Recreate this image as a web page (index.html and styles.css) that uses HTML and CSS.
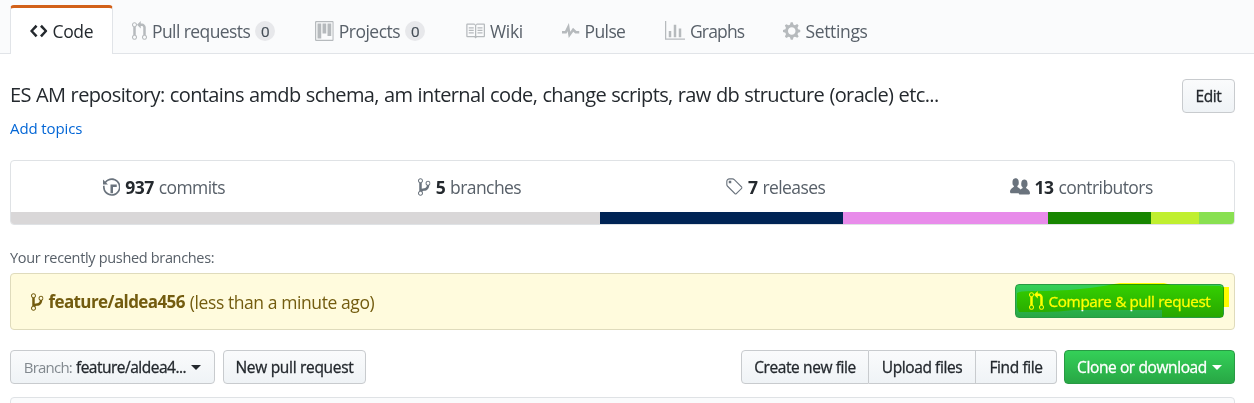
FILE: index.html
```html
<!DOCTYPE html>
<html lang="en">
<head>
<meta charset="utf-8">
<title>Repository</title>
<link rel="stylesheet" href="styles.css">
</head>
<body>
<svg class="defs" aria-hidden="true">
  <symbol id="code" viewBox="0 0 14 16"><path d="M9.5 3L8 4.5 11.5 8 8 11.5 9.5 13 14 8 9.5 3zm-5 0L0 8l4.5 5L6 11.5 2.5 8 6 4.5 4.5 3z"/></symbol>
  <symbol id="pr" viewBox="0 0 12 16"><path d="M11 11.28V5c-.03-.78-.34-1.47-.94-2.06C9.46 2.35 8.78 2.03 8 2H7V0L4 3l3 3V4h1c.27.02.48.11.69.31.21.2.3.42.31.69v6.28A1.993 1.993 0 0 0 10 15a1.993 1.993 0 0 0 1-3.72zm-1 2.92c-.66 0-1.2-.55-1.2-1.2 0-.65.55-1.2 1.2-1.2.65 0 1.2.55 1.2 1.2 0 .65-.55 1.2-1.2 1.2zM4 3c0-1.11-.89-2-2-2a1.993 1.993 0 0 0-1 3.72v6.56A1.993 1.993 0 0 0 2 15a1.993 1.993 0 0 0 1-3.72V4.72c.59-.34 1-.98 1-1.72zm-.8 10c0 .66-.55 1.2-1.2 1.2-.65 0-1.2-.55-1.2-1.2 0-.65.55-1.2 1.2-1.2.65 0 1.2.55 1.2 1.2zM2 4.2C1.34 4.2.8 3.65.8 3c0-.65.55-1.2 1.2-1.2.65 0 1.2.55 1.2 1.2 0 .65-.55 1.2-1.2 1.2z"/></symbol>
  <symbol id="project" viewBox="0 0 15 16"><path fill-rule="evenodd" d="M10 12h3V2h-3v10zm-4-2h3V2H6v8zm-4 4h3V2H2v12zm-1 1h13V1H1v14zM14 0H1a1 1 0 0 0-1 1v14a1 1 0 0 0 1 1h13a1 1 0 0 0 1-1V1a1 1 0 0 0-1-1z"/></symbol>
  <symbol id="book" viewBox="0 0 16 16"><path d="M3 5h4v1H3V5zm0 3h4V7H3v1zm0 2h4V9H3v1zm11-5h-4v1h4V5zm0 2h-4v1h4V7zm0 2h-4v1h4V9zm2-6v9c0 .55-.45 1-1 1H9.5l-1 1-1-1H2c-.55 0-1-.45-1-1V3c0-.55.45-1 1-1h5.5l1 1 1-1H15c.55 0 1 .45 1 1zm-8 .5L7.5 3H2v9h6V3.5zm7-.5H9.5l-.5.5V12h6V3z"/></symbol>
  <symbol id="pulse" viewBox="0 0 14 16"><path d="M11.5 8L8.8 5.4 6.6 8.5 5.5 1.6 2.38 8H0v2h3.6l.9-1.8.9 5.4L9 8.5l1.6 1.5H14V8h-2.5z"/></symbol>
  <symbol id="graph" viewBox="0 0 16 16"><path d="M16 14v1H0V0h1v14h15zM5 13H3V8h2v5zm4 0H7V3h2v10zm4 0h-2V6h2v7z"/></symbol>
  <symbol id="gear" viewBox="0 0 14 16"><path d="M14 8.77v-1.6l-1.94-.64-.45-1.09.88-1.84-1.13-1.13-1.81.91-1.09-.45-.69-1.92h-1.6l-.63 1.94-1.11.45-1.84-.88-1.13 1.13.91 1.81-.45 1.09L0 7.23v1.59l1.94.64.45 1.09-.88 1.84 1.13 1.13 1.81-.91 1.09.45.69 1.92h1.59l.63-1.94 1.11-.45 1.84.88 1.13-1.13-.92-1.81.47-1.09L14 8.75v.02zM7 11c-1.66 0-3-1.34-3-3s1.34-3 3-3 3 1.34 3 3-1.34 3-3 3z"/></symbol>
  <symbol id="history" viewBox="0 0 14 16"><path d="M8 13H6V6h5v2H8v5zM7 1C4.81 1 2.87 2.02 1.59 3.59L0 2v4h4L2.5 4.5C3.55 3.17 5.17 2.3 7 2.3c3.14 0 5.7 2.56 5.7 5.7s-2.56 5.7-5.7 5.7A5.71 5.71 0 0 1 1.3 8c0-.34.03-.67.09-1H.08C.03 7.33 0 7.66 0 8c0 3.86 3.14 7 7 7s7-3.14 7-7-3.14-7-7-7z"/></symbol>
  <symbol id="branch" viewBox="0 0 10 16"><path d="M10 5c0-1.11-.89-2-2-2a1.993 1.993 0 0 0-1 3.72v.3c-.02.52-.23.98-.63 1.38-.4.4-.86.61-1.38.63-.83.02-1.48.16-2 .45V4.72a1.993 1.993 0 0 0-1-3.72C.88 1 0 1.89 0 3a2 2 0 0 0 1 1.72v6.56c-.59.35-1 .99-1 1.72 0 1.11.89 2 2 2 1.11 0 2-.89 2-2 0-.53-.2-1-.53-1.36.09-.06.48-.41.59-.47.25-.11.56-.17.94-.17 1.05-.05 1.95-.45 2.75-1.25S8.95 7.77 9 6.73h-.02C9.59 6.37 10 5.73 10 5zM2 1.8c.66 0 1.2.55 1.2 1.2 0 .65-.55 1.2-1.2 1.2C1.35 4.2.8 3.65.8 3c0-.65.55-1.2 1.2-1.2zm0 12.41c-.66 0-1.2-.55-1.2-1.2 0-.65.55-1.2 1.2-1.2.65 0 1.2.55 1.2 1.2 0 .65-.55 1.2-1.2 1.2zm6-8c-.66 0-1.2-.55-1.2-1.2 0-.65.55-1.2 1.2-1.2.65 0 1.2.55 1.2 1.2 0 .65-.55 1.2-1.2 1.2z"/></symbol>
  <symbol id="tag" viewBox="0 0 14 16"><path d="M7.73 1.73C7.26 1.26 6.62 1 5.96 1H3.5C2.13 1 1 2.13 1 3.5v2.47c0 .66.27 1.3.73 1.77l6.06 6.06c.39.39 1.02.39 1.41 0l4.59-4.59a.996.996 0 0 0 0-1.41L7.73 1.73zM2.38 7.09c-.31-.3-.47-.7-.47-1.13V3.5c0-.88.72-1.59 1.59-1.59h2.47c.42 0 .83.16 1.13.47l6.14 6.13-4.73 4.73-6.13-6.15zM3.01 3h2v2H3V3h.01z"/></symbol>
  <symbol id="people" viewBox="0 0 16 16"><path d="M16 12.999c0 .439-.45 1-1 1H7.995c-.539 0-.994-.447-.995-.999H1c-.54 0-1-.561-1-1 0-2.634 3-4 3-4s.229-.409 0-1c-.841-.621-1.058-.59-1-3 .058-2.419 1.367-3 2.5-3s2.442.58 2.5 3c.058 2.41-.159 2.379-1 3-.229.59 0 1 0 1s1.549.711 2.42 2.088C9.196 9.369 10 8.999 10 8.999s.229-.409 0-1c-.841-.62-1.058-.59-1-3 .058-2.419 1.367-3 2.5-3s2.437.581 2.495 3c.059 2.41-.158 2.38-1 3-.229.59 0 1 0 1s3.005 1.366 3.005 4z"/></symbol>
</svg>

<nav class="tabs">
  <a class="tab tab-code"><svg class="icon w14"><use href="#code"/></svg><span>Code</span></a>
  <a class="tab tab-pulls"><svg class="icon w12"><use href="#pr"/></svg><span>Pull requests</span><b class="count">0</b></a>
  <a class="tab tab-projects"><svg class="icon w15"><use href="#project"/></svg><span>Projects</span><b class="count">0</b></a>
  <a class="tab tab-wiki"><svg class="icon w16"><use href="#book"/></svg><span>Wiki</span></a>
  <a class="tab tab-pulse"><svg class="icon w14"><use href="#pulse"/></svg><span>Pulse</span></a>
  <a class="tab tab-graphs"><svg class="icon w16"><use href="#graph"/></svg><span>Graphs</span></a>
  <a class="tab tab-settings"><svg class="icon w14"><use href="#gear"/></svg><span>Settings</span></a>
</nav>

<main class="content">
  <header class="about">
    <div class="about-text">
      <p class="description">ES AM repository: contains amdb schema, am internal code, change scripts, raw db structure (oracle) etc...</p>
      <a class="topics">Add topics</a>
    </div>
    <button class="btn edit">Edit</button>
  </header>

  <section class="summary">
    <ul class="stats">
      <li><svg class="icon w14"><use href="#history"/></svg><strong>937</strong><span>commits</span></li>
      <li><svg class="icon w10"><use href="#branch"/></svg><strong>5</strong><span>branches</span></li>
      <li><svg class="icon w14"><use href="#tag"/></svg><strong>7</strong><span>releases</span></li>
      <li><svg class="icon w16"><use href="#people"/></svg><strong>13</strong><span>contributors</span></li>
    </ul>
    <div class="languages"><i class="lang-a"></i><i class="lang-b"></i><i class="lang-c"></i><i class="lang-d"></i><i class="lang-e"></i><i class="lang-f"></i></div>
  </section>

  <p class="pushed">Your recently pushed branches:</p>
  <section class="notice">
    <svg class="icon w10"><use href="#branch"/></svg>
    <strong class="branch-name">feature/aldea456</strong>
    <span class="ago">(less than a minute ago)</span>
    <div class="compare-wrap">
      <button class="btn primary compare"><svg class="icon w12"><use href="#pr"/></svg><span>Compare &amp; pull request</span></button>
      <svg class="marker" viewBox="0 0 218 38"><path d="M3 25V11Q5 9 18 9Q46 9 66 7Q86 5 100 2L106 1H150L157 3L207 4V5H215V25H209V35H148V28H60Q45 30 30 30H5Z"/></svg>
    </div>
  </section>

  <section class="actions">
    <button class="btn branch-select"><span class="muted">Branch:</span><span class="branch-value">feature/aldea4...</span><i class="caret"></i></button>
    <button class="btn new-pr">New pull request</button>
    <div class="group">
      <button class="btn create">Create new file</button>
      <button class="btn upload">Upload files</button>
      <button class="btn find">Find file</button>
    </div>
    <button class="btn primary clone"><span>Clone or download</span><i class="caret"></i></button>
  </section>
  <div class="files"></div>
</main>
</body>
</html>
```
FILE: styles.css
```css
* { box-sizing: border-box; }
body { margin: 0; height: 403px; overflow: hidden; background: #fff; color: #24292e; font: 17.5px/26px "Open Sans", "Noto Sans", sans-serif; }
p, ul { margin: 0; padding: 0; }
.defs { display: none; }
.icon { height: 20px; flex: none; fill: currentColor; }
.w10 { width: 12.5px; }
.w12 { width: 15px; }
.w14 { width: 17.5px; }
.w15 { width: 18.75px; }
.w16 { width: 20px; }

.tabs { display: flex; height: 54px; padding: 5px 0 0 10px; background: #fafbfc; border-bottom: 1px solid #e1e4e8; }
.tab { display: flex; align-items: center; height: 48px; padding: 4px 0 0 19px; color: #586069; white-space: nowrap; letter-spacing: -.35px; }
.tab .icon { color: #b6babd; margin-right: 5px; }
.tab-code { width: 103px; height: 49px; padding-top: 0; padding-bottom: 1px; background: #fff; color: #24292e; border: 1px solid #e1e4e8; border-top: 3px solid #d26119; border-bottom: 0; border-radius: 4px 4px 0 0; padding-left: 19px; }
.tab-code .icon { color: #24292e; }
.tab-pulls { width: 183px; letter-spacing: -.58px; }
.tab-projects { width: 150px; letter-spacing: -.5px; }
.tab-wiki { width: 97px; }
.tab-pulse { width: 103px; letter-spacing: -.6px; }
.tab-graphs { width: 118px; letter-spacing: -.85px; }
.count { width: 20px; height: 20px; margin-left: 5px; border-radius: 10px; background: #e7e8eb; color: #444d56; font-size: 15px; font-weight: 500; letter-spacing: 0; line-height: 20px; text-align: center; -webkit-text-stroke: .2px; }

.content { width: 1225px; margin-left: 10px; }
.about { display: flex; justify-content: space-between; height: 106px; padding-top: 25px; }
.about-text { margin-top: -1px; }
.description { height: 34px; font-size: 20px; line-height: 33px; white-space: nowrap; letter-spacing: -.62px; word-spacing: .6px; }
.topics { display: block; font-size: 15px; line-height: 32px; color: #0366d6; letter-spacing: -.1px; }

.btn { display: flex; align-items: center; justify-content: center; height: 34px; padding: 0; border: 1px solid #c8cbce; border-radius: 4px; background: linear-gradient(#fafbfc, #eff3f6); color: #24292e; font: 500 15.5px/24px "Open Sans", "Noto Sans", sans-serif; letter-spacing: -.4px; white-space: nowrap; -webkit-text-stroke: .3px; }
.edit { width: 53px; }
.primary { color: #fff; border-color: #289a44; background: linear-gradient(#34d058, #28a745); }

.summary { height: 65px; border: 1px solid #dfe2e5; border-radius: 4px; overflow: hidden; }
.stats { display: grid; grid-template-columns: repeat(4, 1fr); height: 51px; list-style: none; color: #586069; letter-spacing: -.58px; }
.stats li { display: flex; align-items: center; justify-content: center; }
.stats .icon { margin-right: 5px; color: #6a737d; }
.stats strong { margin-right: 5px; color: #24292e; }
.languages { display: flex; height: 12px; }
.lang-a { width: 589px; background: #d9d7d8; }
.lang-b { width: 243px; background: #002455; }
.lang-c { width: 205px; background: #e88bea; }
.lang-d { width: 103px; background: #178600; }
.lang-e { width: 48px; background: #c0ef2f; }
.lang-f { flex: 1; background: #89e051; }

.pushed { height: 48px; padding-top: 20px; color: #586069; font-size: 14.5px; letter-spacing: -.33px; }
.notice { display: flex; align-items: center; height: 57px; padding: 0 10px 0 20px; border: 1px solid #dfdbbc; border-radius: 4px; background: #fffbdd; color: #735c0f; white-space: nowrap; letter-spacing: -.4px; }
.branch-name { margin: 0 5px; font-size: 17px; font-weight: 700; letter-spacing: -.6px; }
.ago { letter-spacing: -.42px; }
.compare-wrap { position: relative; width: 209px; margin-left: auto; margin-top: -2px; }
.compare { width: 209px; font-weight: 400; font-size: 15.25px; letter-spacing: -.35px; }
.compare .icon { margin-right: 5px; }
.marker { position: absolute; left: -1px; top: -2px; width: 218px; height: 38px; fill: #ff0; mix-blend-mode: multiply; }

.actions { display: flex; height: 67px; padding-top: 20px; }
.branch-select { width: 205px; margin-right: 8px; letter-spacing: -.5px; }
.muted { margin-right: 4px; color: #82898f; font-weight: 400; font-size: 15px; letter-spacing: -.8px; -webkit-text-stroke: 0; }
.caret { width: 0; border: 5px solid transparent; border-top-color: currentColor; border-bottom: 0; margin-left: 5px; }
.new-pr { width: 143px; letter-spacing: -.3px; }
.group { display: flex; margin-left: auto; margin-right: 7px; }
.create { width: 128px; border-radius: 4px 0 0 4px; }
.upload { width: 107px; border-left: 0; border-radius: 0; }
.find { width: 81px; border-left: 0; border-radius: 0 4px 4px 0; }
.clone { width: 171px; }
.files { height: 20px; border: 1px solid #dfe2e5; border-radius: 4px; background: #fafbfc; }
```
